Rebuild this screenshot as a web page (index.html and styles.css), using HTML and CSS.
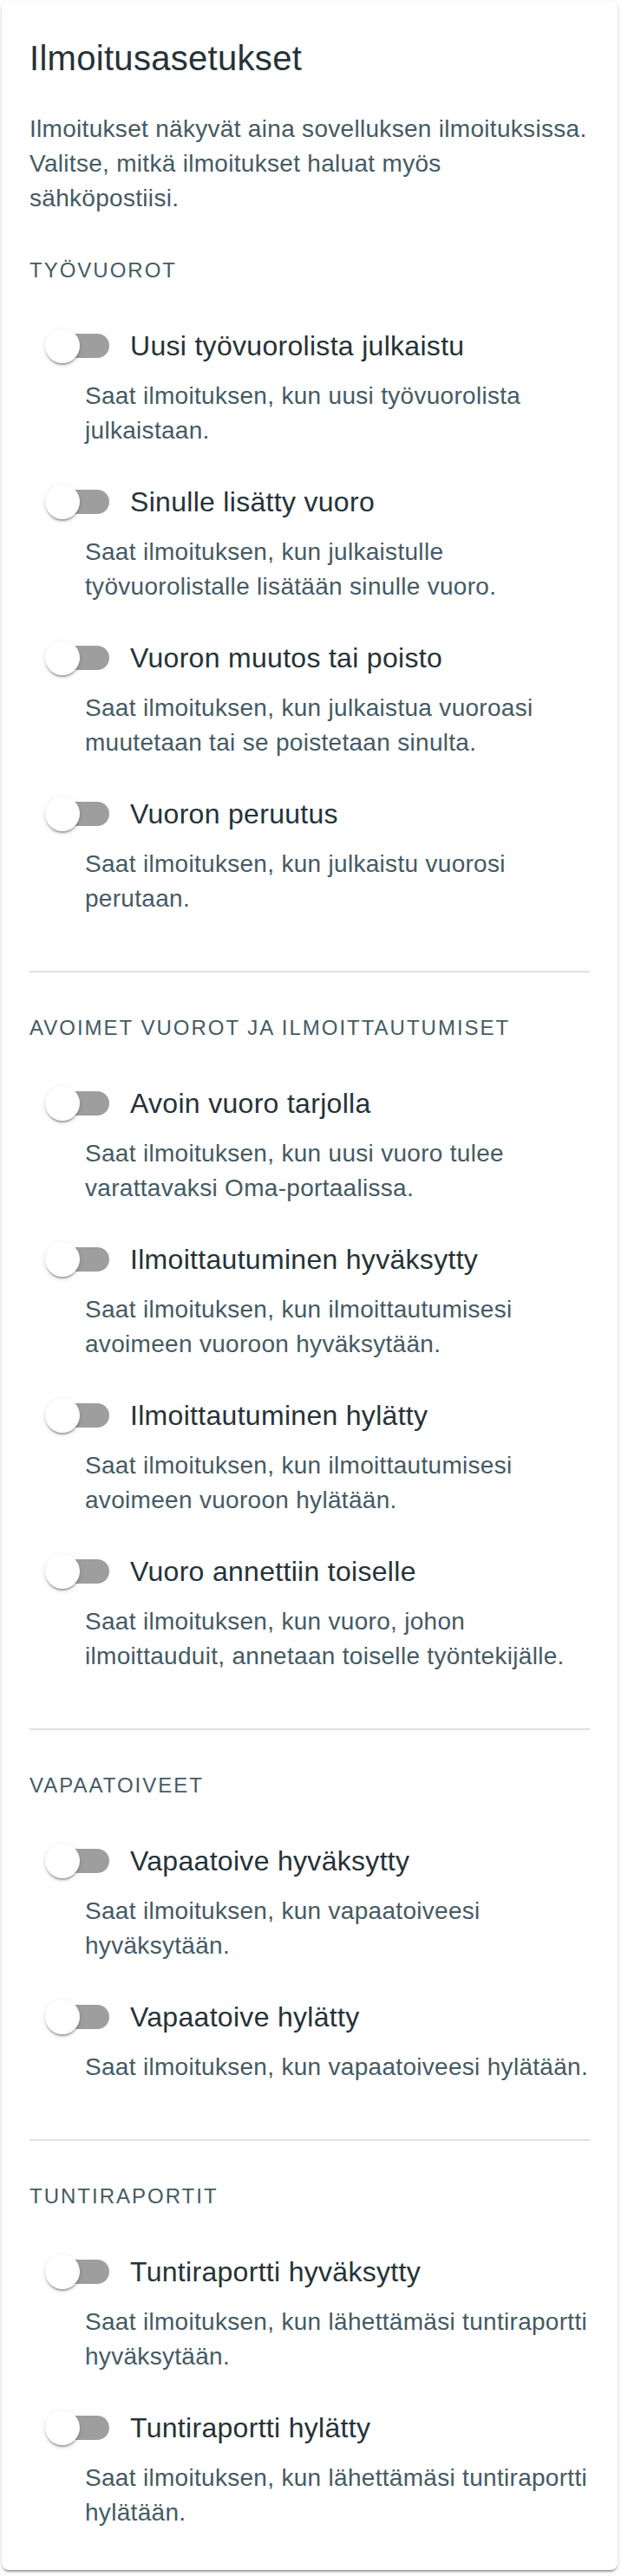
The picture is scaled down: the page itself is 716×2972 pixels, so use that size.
FILE: index.html
```html
<!DOCTYPE html>
<html lang="fi">
<head>
  <meta charset="UTF-8">
  <meta name="viewport" content="width=device-width, initial-scale=1">
  <title>Ilmoitusasetukset</title>
  <link rel="stylesheet" href="styles.css">
</head>
<body>
  <div class="card">
    <h2 class="card-title">Ilmoitusasetukset</h2>
    <p class="intro">Ilmoitukset näkyvät aina sovelluksen ilmoituksissa. Valitse, mitkä ilmoitukset haluat myös sähköpostiisi.</p>

    <section class="group">
      <h3 class="overline">Työvuorot</h3>
      <ul class="options">
        <li class="option">
          <label class="option-row">
            <span class="switch"><input type="checkbox"><span class="track"></span><span class="thumb"></span></span>
            <span class="option-label">Uusi työvuorolista julkaistu</span>
          </label>
          <p class="option-desc">Saat ilmoituksen, kun uusi työvuorolista julkaistaan.</p>
        </li>
        <li class="option">
          <label class="option-row">
            <span class="switch"><input type="checkbox"><span class="track"></span><span class="thumb"></span></span>
            <span class="option-label">Sinulle lisätty vuoro</span>
          </label>
          <p class="option-desc">Saat ilmoituksen, kun julkaistulle työvuorolistalle lisätään sinulle vuoro.</p>
        </li>
        <li class="option">
          <label class="option-row">
            <span class="switch"><input type="checkbox"><span class="track"></span><span class="thumb"></span></span>
            <span class="option-label">Vuoron muutos tai poisto</span>
          </label>
          <p class="option-desc">Saat ilmoituksen, kun julkaistua vuoroasi muutetaan tai se poistetaan sinulta.</p>
        </li>
        <li class="option">
          <label class="option-row">
            <span class="switch"><input type="checkbox"><span class="track"></span><span class="thumb"></span></span>
            <span class="option-label">Vuoron peruutus</span>
          </label>
          <p class="option-desc">Saat ilmoituksen, kun julkaistu vuorosi perutaan.</p>
        </li>
      </ul>
    </section>

    <section class="group">
      <h3 class="overline">Avoimet vuorot ja ilmoittautumiset</h3>
      <ul class="options">
        <li class="option">
          <label class="option-row">
            <span class="switch"><input type="checkbox"><span class="track"></span><span class="thumb"></span></span>
            <span class="option-label">Avoin vuoro tarjolla</span>
          </label>
          <p class="option-desc">Saat ilmoituksen, kun uusi vuoro tulee varattavaksi Oma-portaalissa.</p>
        </li>
        <li class="option">
          <label class="option-row">
            <span class="switch"><input type="checkbox"><span class="track"></span><span class="thumb"></span></span>
            <span class="option-label">Ilmoittautuminen hyväksytty</span>
          </label>
          <p class="option-desc">Saat ilmoituksen, kun ilmoittautumisesi avoimeen vuoroon hyväksytään.</p>
        </li>
        <li class="option">
          <label class="option-row">
            <span class="switch"><input type="checkbox"><span class="track"></span><span class="thumb"></span></span>
            <span class="option-label">Ilmoittautuminen hylätty</span>
          </label>
          <p class="option-desc">Saat ilmoituksen, kun ilmoittautumisesi avoimeen vuoroon hylätään.</p>
        </li>
        <li class="option">
          <label class="option-row">
            <span class="switch"><input type="checkbox"><span class="track"></span><span class="thumb"></span></span>
            <span class="option-label">Vuoro annettiin toiselle</span>
          </label>
          <p class="option-desc">Saat ilmoituksen, kun vuoro, johon ilmoittauduit, annetaan toiselle työntekijälle.</p>
        </li>
      </ul>
    </section>

    <section class="group">
      <h3 class="overline">Vapaatoiveet</h3>
      <ul class="options">
        <li class="option">
          <label class="option-row">
            <span class="switch"><input type="checkbox"><span class="track"></span><span class="thumb"></span></span>
            <span class="option-label">Vapaatoive hyväksytty</span>
          </label>
          <p class="option-desc">Saat ilmoituksen, kun vapaatoiveesi hyväksytään.</p>
        </li>
        <li class="option">
          <label class="option-row">
            <span class="switch"><input type="checkbox"><span class="track"></span><span class="thumb"></span></span>
            <span class="option-label">Vapaatoive hylätty</span>
          </label>
          <p class="option-desc">Saat ilmoituksen, kun vapaatoiveesi hylätään.</p>
        </li>
      </ul>
    </section>

    <section class="group">
      <h3 class="overline">Tuntiraportit</h3>
      <ul class="options">
        <li class="option">
          <label class="option-row">
            <span class="switch"><input type="checkbox"><span class="track"></span><span class="thumb"></span></span>
            <span class="option-label">Tuntiraportti hyväksytty</span>
          </label>
          <p class="option-desc">Saat ilmoituksen, kun lähettämäsi tuntiraportti hyväksytään.</p>
        </li>
        <li class="option">
          <label class="option-row">
            <span class="switch"><input type="checkbox"><span class="track"></span><span class="thumb"></span></span>
            <span class="option-label">Tuntiraportti hylätty</span>
          </label>
          <p class="option-desc">Saat ilmoituksen, kun lähettämäsi tuntiraportti hylätään.</p>
        </li>
      </ul>
    </section>
  </div>
</body>
</html>
```

FILE: styles.css
```css
body {
  margin: 0;
  padding: 1px 4px 4px 2px;
  background: #fff;
  font-family: "Liberation Sans", Arial, sans-serif;
  color: #263238;
}

.card {
  background: #fff;
  border-radius: 8px;
  box-shadow: 0 4px 2px -2px rgba(0,0,0,0.2), 0 2px 2px 0 rgba(0,0,0,0.14), 0 2px 6px 0 rgba(0,0,0,0.12);
  padding: 34px 32px 46px;
}

.card-title {
  margin: 0 0 30px;
  font-size: 40px;
  line-height: 64px;
  font-weight: 400;
  letter-spacing: 0.3px;
  color: #263238;
}

.intro,
.option-desc {
  margin: 0;
  font-size: 28px;
  line-height: 40px;
  letter-spacing: 0.3px;
  color: #455a64;
}

.intro { margin-bottom: 31px; }

/* section + divider between groups */
.group + .group {
  border-top: 2px solid #e0e0e0;
  padding-top: 32px;
}
.group { padding-bottom: 39px; }
.group:last-child { padding-bottom: 0; }

.overline {
  margin: 0 0 17px;
  font-size: 24px;
  line-height: 64px;
  font-weight: 400;
  letter-spacing: 2px;
  text-transform: uppercase;
  color: #455a64;
}

.options { list-style: none; margin: 0; padding: 0; }
.option { margin-bottom: 24px; }
.group:last-child .option:last-child { margin-bottom: 0; }

.option-row {
  display: flex;
  align-items: center;
  height: 76px;
  cursor: pointer;
}

.option-label {
  font-size: 32px;
  line-height: 48px;
  letter-spacing: 0.3px;
  color: #263238;
}

.option-desc { padding-left: 64px; }

/* toggle switch */
.switch {
  position: relative;
  flex: none;
  width: 116px;
  height: 76px;
}
.switch input {
  position: absolute;
  opacity: 0;
  margin: 0;
  width: 100%;
  height: 100%;
  cursor: pointer;
}
.track {
  position: absolute;
  left: 24px;
  top: 24px;
  width: 68px;
  height: 28px;
  border-radius: 14px;
  background: #9e9e9e;
  transition: background-color 0.15s;
}
.thumb {
  position: absolute;
  left: 18px;
  top: 18px;
  width: 40px;
  height: 40px;
  border-radius: 50%;
  background: #fff;
  box-shadow: 0 4px 2px -2px rgba(0,0,0,0.2), 0 2px 2px 0 rgba(0,0,0,0.14), 0 2px 6px 0 rgba(0,0,0,0.12);
  transition: transform 0.15s;
  pointer-events: none;
}
.switch input:checked ~ .track { background: #90caf9; }
.switch input:checked ~ .thumb { transform: translateX(40px); background: #1976d2; }
```
